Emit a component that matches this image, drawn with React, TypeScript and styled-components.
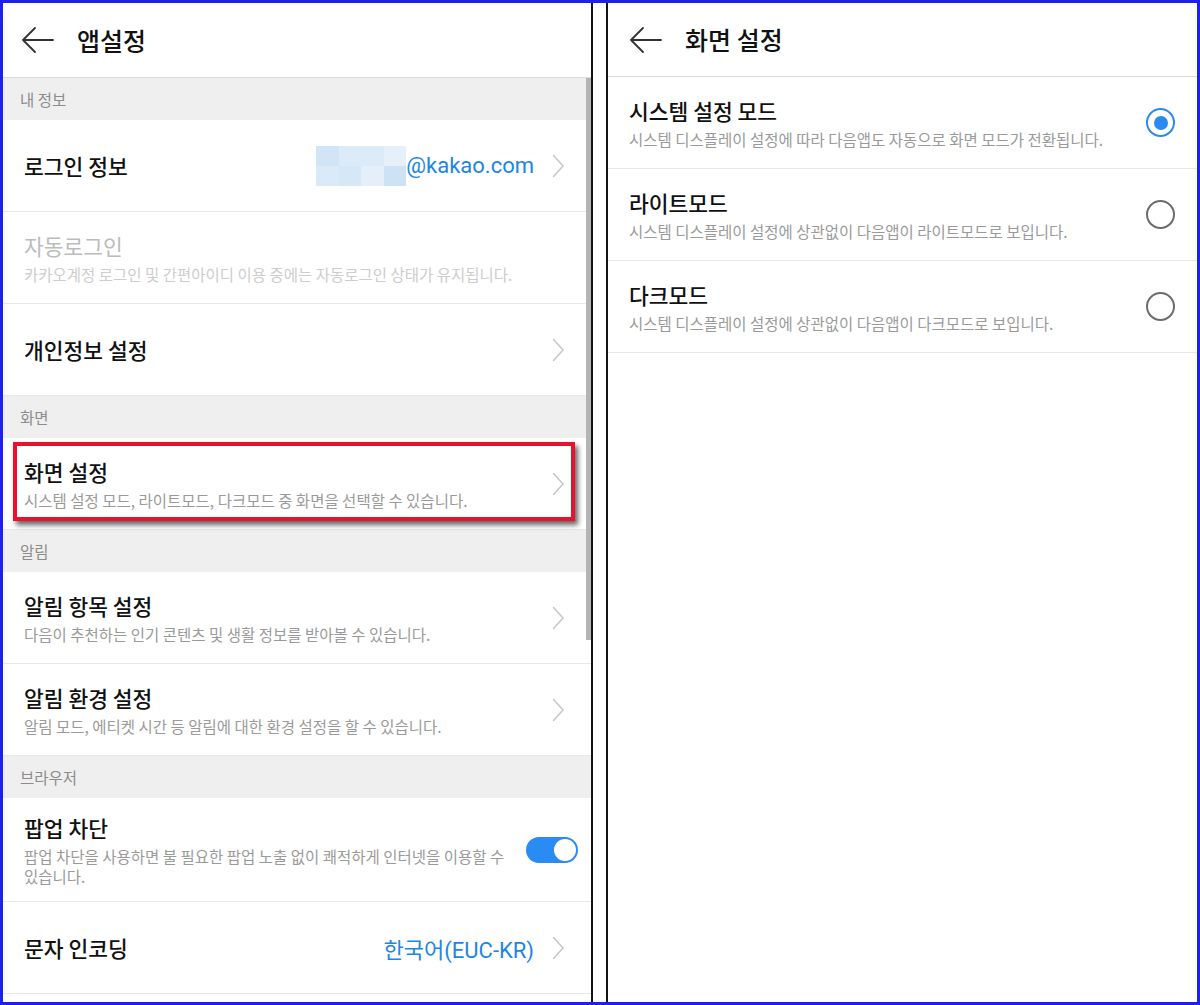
import React from 'react';
import styled, { createGlobalStyle } from 'styled-components';

const GlobalStyle = createGlobalStyle`
  html, body {
    margin: 0;
    padding: 0;
    background: #ffffff;
  }
  body {
    font-family: "Noto Sans CJK KR", "Noto Sans", sans-serif;
    -webkit-font-smoothing: antialiased;
  }
`;

const Frame = styled.div`
  box-sizing: border-box;
  width: 1200px;
  height: 1005px;
  border: 3px solid #1f1ff0;
  display: flex;
  overflow: hidden;
  background: #ffffff;
`;

const Pane = styled.div<{ $w?: number }>`
  position: relative;
  ${(p) => (p.$w ? `width: ${p.$w}px;` : 'flex: 1;')}
  display: flex;
  flex-direction: column;
  overflow: hidden;
  background: #ffffff;
`;

const Splitter = styled.div`
  box-sizing: border-box;
  width: 17px;
  border-left: 2px solid #141414;
  border-right: 2px solid #141414;
  background: #ffffff;
`;

const Header = styled.div<{ $h: number; $pl: number }>`
  height: ${(p) => p.$h}px;
  flex-shrink: 0;
  border-bottom: 1px solid #dcdcdc;
  display: flex;
  align-items: center;
  padding-left: ${(p) => p.$pl}px;
  gap: 23px;
`;

const HeaderTitle = styled.div`
  font-size: 25px;
  font-weight: 500;
  color: #111111;
  margin-bottom: 1px;
`;

const Section = styled.div`
  height: 42px;
  flex-shrink: 0;
  background: #efefef;
  display: flex;
  align-items: center;
  padding-left: 17px;
  font-size: 15.5px;
  color: #8c8c8c;
`;

const Row = styled.div<{ $h?: number; $pr?: number }>`
  position: relative;
  box-sizing: border-box;
  height: ${(p) => (p.$h ?? 92)}px;
  flex-shrink: 0;
  border-bottom: 1px solid #e8e8e8;
  display: flex;
  align-items: center;
  padding: 0 ${(p) => (p.$pr ?? 27)}px 0 21px;
  gap: 18px;
`;

const RowText = styled.div`
  flex: 1;
  min-width: 0;
  display: flex;
  flex-direction: column;
`;

const RowTitle = styled.div<{ $disabled?: boolean }>`
  font-size: 21.5px;
  line-height: 28px;
  font-weight: ${(p) => (p.$disabled ? 400 : 500)};
  color: ${(p) => (p.$disabled ? '#bcbcbc' : '#111111')};
`;

const RowSub = styled.div<{ $disabled?: boolean }>`
  font-size: 15.5px;
  line-height: 20px;
  margin-top: 4px;
  word-break: keep-all;
  color: ${(p) => (p.$disabled ? '#cdcdcd' : '#9a9a9a')};
`;

const Value = styled.div`
  display: flex;
  align-items: center;
  font-family: Roboto, "Noto Sans CJK KR", sans-serif;
  font-size: 22px;
  color: #1b86e6;
`;

const Mosaic = styled.div`
  display: grid;
  grid-template-columns: repeat(4, 22.5px);
  grid-template-rows: repeat(2, 20px);
`;

const Tile = styled.div<{ $c: string }>`
  background: ${(p) => p.$c};
`;

const Highlight = styled.div`
  position: absolute;
  left: 10px;
  top: 4px;
  width: 562px;
  height: 79px;
  box-sizing: border-box;
  border: 4px solid #e8122e;
  box-shadow: 3px 4px 5px rgba(0, 0, 0, 0.6);
  pointer-events: none;
`;

const Scrollbar = styled.div`
  position: absolute;
  right: 0;
  top: 75px;
  width: 5px;
  height: 562px;
  background: #b4b4b4;
`;

const Toggle = styled.div`
  box-sizing: border-box;
  width: 52px;
  height: 26px;
  border-radius: 13px;
  background: #2b8bf5;
  display: flex;
  align-items: center;
  justify-content: flex-end;
  padding: 2px;
  margin-right: -14px;
`;

const Knob = styled.div`
  box-sizing: border-box;
  width: 22px;
  height: 22px;
  border-radius: 50%;
  background: #ffffff;
`;

const Radio = styled.div<{ $on?: boolean }>`
  box-sizing: border-box;
  width: 29px;
  height: 29px;
  border-radius: 50%;
  border: 2.5px solid ${(p) => (p.$on ? '#2a8af0' : '#6c6c6c')};
  display: flex;
  align-items: center;
  justify-content: center;
  flex-shrink: 0;
  margin-right: 1px;
`;

const RadioDot = styled.div`
  width: 14px;
  height: 14px;
  border-radius: 50%;
  background: #2a8af0;
`;

const BackArrow = () => (
  <svg width="32" height="26" viewBox="0 0 32 26" fill="none">
    <path d="M1 13 H31 M13 1 L1 13 L13 25" stroke="#333333" strokeWidth="1.8" strokeLinecap="round" strokeLinejoin="round" />
  </svg>
);

const Chevron = () => (
  <svg width="12" height="24" viewBox="0 0 12 24" fill="none">
    <path d="M1.5 1.5 L11 12 L1.5 22.5" stroke="#c6c6c6" strokeWidth="1.5" strokeLinecap="round" strokeLinejoin="round" />
  </svg>
);

const mosaicColors = ['#d2e5f6', '#dcebf9', '#dcebf9', '#e6f0fa', '#dbeaf8', '#d6e8f7', '#e4effa', '#cde3f5'];

const modes = [
  { title: '시스템 설정 모드', sub: '시스템 디스플레이 설정에 따라 다음앱도 자동으로 화면 모드가 전환됩니다.', on: true },
  { title: '라이트모드', sub: '시스템 디스플레이 설정에 상관없이 다음앱이 라이트모드로 보입니다.', on: false },
  { title: '다크모드', sub: '시스템 디스플레이 설정에 상관없이 다음앱이 다크모드로 보입니다.', on: false },
];

const App: React.FC = () => {
  return (
    <>
      <GlobalStyle />
      <Frame>
        <Pane $w={588}>
          <Header $h={74} $pl={19}>
            <BackArrow />
            <HeaderTitle>앱설정</HeaderTitle>
          </Header>
          <Section>내 정보</Section>
          <Row>
            <RowText>
              <RowTitle>로그인 정보</RowTitle>
            </RowText>
            <Value>
              <Mosaic>
                {mosaicColors.map((c, i) => (
                  <Tile key={i} $c={c} />
                ))}
              </Mosaic>
              @kakao.com
            </Value>
            <Chevron />
          </Row>
          <Row>
            <RowText>
              <RowTitle $disabled>자동로그인</RowTitle>
              <RowSub $disabled>카카오계정 로그인 및 간편아이디 이용 중에는 자동로그인 상태가 유지됩니다.</RowSub>
            </RowText>
          </Row>
          <Row>
            <RowText>
              <RowTitle>개인정보 설정</RowTitle>
            </RowText>
            <Chevron />
          </Row>
          <Section>화면</Section>
          <Row>
            <RowText>
              <RowTitle>화면 설정</RowTitle>
              <RowSub>시스템 설정 모드, 라이트모드, 다크모드 중 화면을 선택할 수 있습니다.</RowSub>
            </RowText>
            <Chevron />
            <Highlight />
          </Row>
          <Section>알림</Section>
          <Row>
            <RowText>
              <RowTitle>알림 항목 설정</RowTitle>
              <RowSub>다음이 추천하는 인기 콘텐츠 및 생활 정보를 받아볼 수 있습니다.</RowSub>
            </RowText>
            <Chevron />
          </Row>
          <Row>
            <RowText>
              <RowTitle>알림 환경 설정</RowTitle>
              <RowSub>알림 모드, 에티켓 시간 등 알림에 대한 환경 설정을 할 수 있습니다.</RowSub>
            </RowText>
            <Chevron />
          </Row>
          <Section>브라우저</Section>
          <Row $h={104}>
            <RowText>
              <RowTitle>팝업 차단</RowTitle>
              <RowSub>팝업 차단을 사용하면 불 필요한 팝업 노출 없이 쾌적하게 인터넷을 이용할 수 있습니다.</RowSub>
            </RowText>
            <Toggle>
              <Knob />
            </Toggle>
          </Row>
          <Row>
            <RowText>
              <RowTitle>문자 인코딩</RowTitle>
            </RowText>
            <Value>한국어(EUC-KR)</Value>
            <Chevron />
          </Row>
          <Scrollbar />
        </Pane>
        <Splitter />
        <Pane>
          <Header $h={73} $pl={22}>
            <BackArrow />
            <HeaderTitle>화면 설정</HeaderTitle>
          </Header>
          {modes.map((m) => (
            <Row key={m.title} $pr={21}>
              <RowText>
                <RowTitle>{m.title}</RowTitle>
                <RowSub>{m.sub}</RowSub>
              </RowText>
              <Radio $on={m.on}>{m.on && <RadioDot />}</Radio>
            </Row>
          ))}
        </Pane>
      </Frame>
    </>
  );
};

export default App;
